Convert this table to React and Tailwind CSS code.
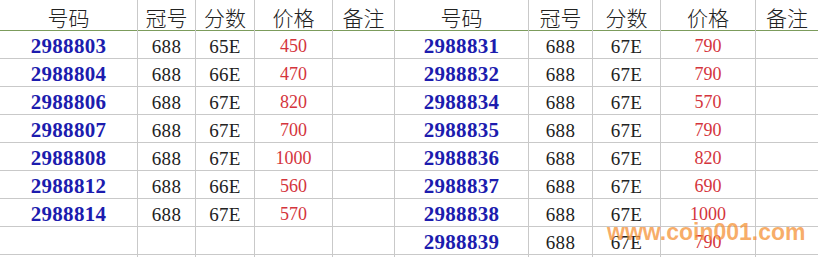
import React from "react";

const left = [
  ["2988803", "688", "65E", "450"],
  ["2988804", "688", "66E", "470"],
  ["2988806", "688", "67E", "820"],
  ["2988807", "688", "67E", "700"],
  ["2988808", "688", "67E", "1000"],
  ["2988812", "688", "66E", "560"],
  ["2988814", "688", "67E", "570"],
  null,
];

const right = [
  ["2988831", "688", "67E", "790"],
  ["2988832", "688", "67E", "790"],
  ["2988834", "688", "67E", "570"],
  ["2988835", "688", "67E", "790"],
  ["2988836", "688", "67E", "820"],
  ["2988837", "688", "67E", "690"],
  ["2988838", "688", "67E", "1000"],
  ["2988839", "688", "67E", "790"],
];

const headers = ["号码", "冠号", "分数", "价格", "备注"];

const cellBase = "flex items-center justify-center border-r border-[#c9c9c9]";

const DataCells = ({ row }) => (
  <>
    <div className={`${cellBase} text-[#1c1cae] font-bold text-[21px] tracking-[0.3px] font-['Liberation_Serif',serif]`}>
      {row ? row[0] : ""}
    </div>
    <div className={`${cellBase} text-[#222] text-[19px] tracking-[0.3px] font-['Liberation_Serif',serif]`}>
      {row ? row[1] : ""}
    </div>
    <div className={`${cellBase} text-[#222] text-[19px] tracking-[0.3px] font-['Liberation_Serif',serif]`}>
      {row ? row[2] : ""}
    </div>
    <div className={`${cellBase} text-[#d4343c] text-[18px] font-['Liberation_Serif',serif]`}>
      {row ? row[3] : ""}
    </div>
  </>
);

const grid =
  "grid grid-cols-[138px_58px_59px_78px_62px_134px_64px_68px_95px_62px]";

export default function App() {
  return (
    <div className="relative w-[818px] h-[257px] bg-white overflow-hidden">
      <div
        className={`${grid} h-[31px] border-b border-[#7c9c5c] text-[21px] text-[#222] font-['Noto_Sans_CJK_SC',sans-serif] font-light`}
      >
        {[...headers, ...headers].map((h, i) => (
          <div
            key={i}
            className={`flex items-center justify-center pt-[2px] ${
              i < 9 ? "border-r border-[#c9c9c9]" : ""
            }`}
          >
            {h}
          </div>
        ))}
      </div>

      {left.map((l, i) => (
        <div key={i} className={`${grid} h-[28px] border-b border-[#c9c9c9]`}>
          <DataCells row={l} />
          <div className={cellBase}></div>
          <DataCells row={right[i]} />
          <div></div>
        </div>
      ))}

      <div className="absolute left-[607px] top-[215px] text-[23px] font-bold text-[#f59238]/75 font-['Liberation_Sans',sans-serif]">
        www.coin001.com
      </div>
    </div>
  );
}
